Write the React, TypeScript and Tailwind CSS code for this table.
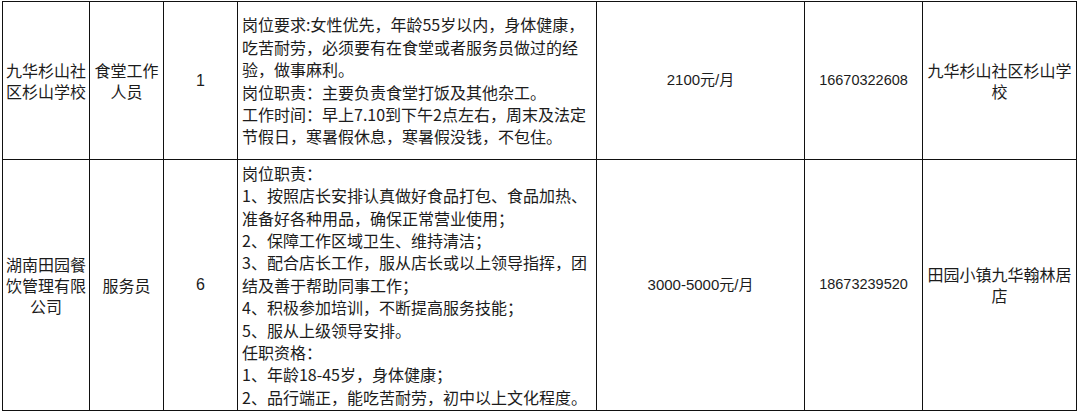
import React from "react";

const cjk = { fontFamily: '"Noto Sans CJK SC", "Liberation Sans", sans-serif' };
const num = { fontFamily: '"Liberation Sans", "Noto Sans CJK SC", sans-serif' };

const rows = [
  {
    company: ["九华杉山社", "区杉山学校"],
    job: ["食堂工作", "人员"],
    count: "1",
    desc: [
      "岗位要求:女性优先，年龄55岁以内，身体健康，",
      "吃苦耐劳，必须要有在食堂或者服务员做过的经",
      "验，做事麻利。",
      "岗位职责：主要负责食堂打饭及其他杂工。",
      "工作时间：早上7.10到下午2点左右，周末及法定",
      "节假日，寒暑假休息，寒暑假没钱，不包住。",
    ],
    salary: "2100元/月",
    phone: "16670322608",
    place: ["九华杉山社区杉山学", "校"],
    height: "h-[157px]",
  },
  {
    company: ["湖南田园餐", "饮管理有限", "公司"],
    job: ["服务员"],
    count: "6",
    desc: [
      "岗位职责：",
      "1、按照店长安排认真做好食品打包、食品加热、",
      "准备好各种用品，确保正常营业使用；",
      "2、保障工作区域卫生、维持清洁；",
      "3、配合店长工作，服从店长或以上领导指挥，团",
      "结及善于帮助同事工作；",
      "4、积极参加培训，不断提高服务技能；",
      "5、服从上级领导安排。",
      "任职资格：",
      "1、年龄18-45岁，身体健康；",
      "2、品行端正，能吃苦耐劳，初中以上文化程度。",
    ],
    salary: "3000-5000元/月",
    phone: "18673239520",
    place: ["田园小镇九华翰林居", "店"],
    height: "h-[250px]",
  },
];

function Lines({ lines }: { lines: string[] }) {
  return (
    <div className="text-center text-[16px] leading-[21px] text-[#1c1c1c]" style={cjk}>
      {lines.map((l, i) => (
        <div key={i} className="whitespace-nowrap">{l}</div>
      ))}
    </div>
  );
}

export default function App() {
  return (
    <div className="h-[413px] w-[1080px] overflow-hidden bg-white pl-[2px] pt-[1px]">
      <div className="grid w-[1075px] grid-cols-[86px_73px_73px_358px_207px_117px_153px] gap-px border border-[#111] bg-[#111]">
        {rows.map((r, i) => (
          <React.Fragment key={i}>
            <div className={`flex items-center justify-center bg-white ${r.height}`}>
              <Lines lines={r.company} />
            </div>
            <div className="flex items-center justify-center bg-white">
              <Lines lines={r.job} />
            </div>
            <div className="flex items-center justify-center bg-white text-[16px] text-[#1c1c1c]" style={num}>
              {r.count}
            </div>
            <div className="flex flex-col justify-center bg-white pl-[4px] text-[16px] leading-[22.4px] text-[#1c1c1c]" style={cjk}>
              {r.desc.map((l, j) => (
                <div key={j} className="whitespace-nowrap">{l}</div>
              ))}
            </div>
            <div className="flex items-center justify-center bg-white text-[15px] text-[#1c1c1c]" style={num}>
              {r.salary}
            </div>
            <div className="flex items-center justify-center bg-white text-[14.5px] text-[#1c1c1c]" style={num}>
              {r.phone}
            </div>
            <div className="flex items-center justify-center bg-white">
              <Lines lines={r.place} />
            </div>
          </React.Fragment>
        ))}
      </div>
    </div>
  );
}
